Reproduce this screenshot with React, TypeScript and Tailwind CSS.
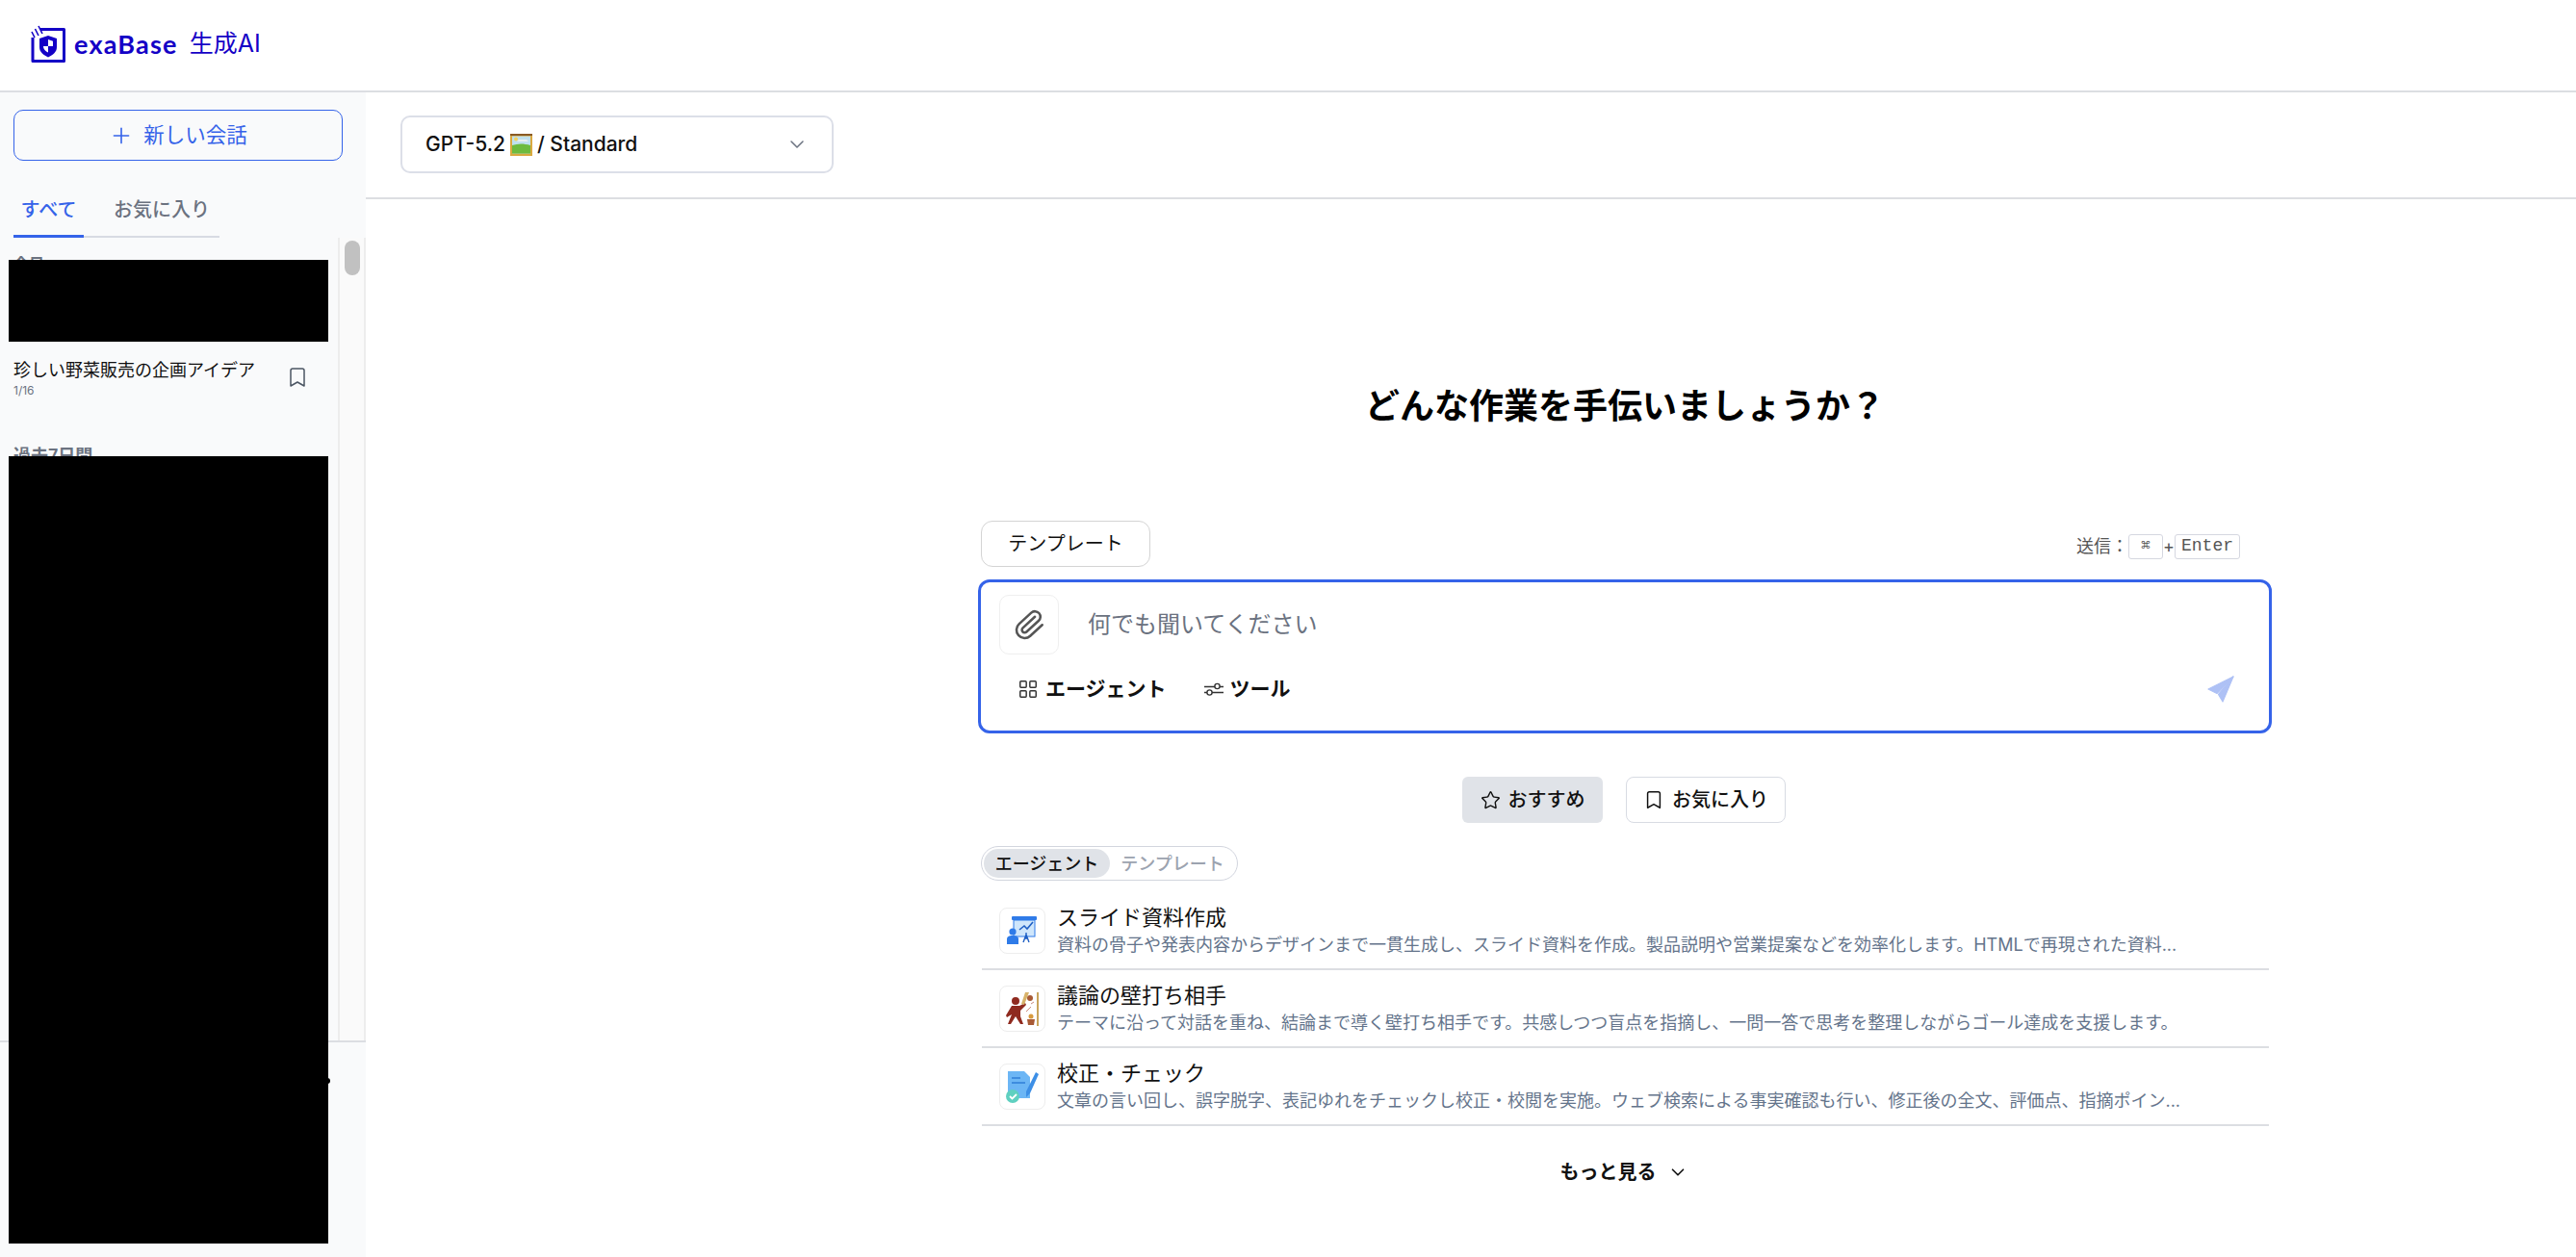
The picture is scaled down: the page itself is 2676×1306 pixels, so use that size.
import React from "react";
import { Bookmark, ChevronDown, LayoutGrid, Paperclip, Plus, Star } from "lucide-react";

const AGENTS = [
  {
    title: "スライド資料作成",
    body: "資料の骨子や発表内容からデザインまで一貫生成し、スライド資料を作成。製品説明や営業提案などを効率化します。HTMLで再現された資料...",
    icon: "slide",
  },
  {
    title: "議論の壁打ち相手",
    body: "テーマに沿って対話を重ね、結論まで導く壁打ち相手です。共感しつつ盲点を指摘し、一問一答で思考を整理しながらゴール達成を支援します。",
    icon: "wall",
  },
  {
    title: "校正・チェック",
    body: "文章の言い回し、誤字脱字、表記ゆれをチェックし校正・校閲を実施。ウェブ検索による事実確認も行い、修正後の全文、評価点、指摘ポイン...",
    icon: "check",
  },
];

const Logo = () => (
  <svg width="38" height="40" viewBox="0 0 38 40" fill="none">
    <path d="M11 4.500H35.500V37.500H3V13" stroke="#1400c6" strokeWidth="3" strokeLinejoin="round" />
    <path d="M2 7l3 6M5.500 4l3.500 7M9 1l4 8" stroke="#1400c6" strokeWidth="1.600" />
    <path d="M19 11l9 3v9c0 5-4 8-9 10.500c-5-2.500-9-5.500-9-10.500v-9z" fill="#1400c6" />
    <path d="M19 15l5 1.800v5.200h-5zM19 22v6.500c-2.500-1.300-5-3-5-6.500z" fill="#fff" />
  </svg>
);

const PictureEmoji = () => (
  <svg width="23" height="23" viewBox="0 0 23 23" className="mx-[5px] inline-block">
    <rect width="23" height="23" fill="#d9a93f" />
    <rect x="0" y="0" width="23" height="2" fill="#8a5a24" />
    <rect x="2" y="2.500" width="19" height="18" fill="#bfe0ee" />
    <circle cx="6" cy="5.500" r="2" fill="#f4d35e" />
    <path d="M9 6h8l2 2H7z" fill="#e9eef0" />
    <path d="M2 12c6-2 12-2 19 0v8.500H2z" fill="#6dbb3e" />
  </svg>
);

const ToolIcon = () => (
  <svg width="22" height="16" viewBox="0 0 22 16" fill="none" stroke="#333" strokeWidth="1.400">
    <path d="M1 5.500h11M17 5.500h4M1 11.500h3M9 11.500h12" />
    <circle cx="14.500" cy="5" r="2.600" />
    <circle cx="6.500" cy="11.500" r="2.600" />
  </svg>
);

const SendIcon = () => (
  <svg width="28" height="28" viewBox="0 0 28 28" fill="#aec1f5" stroke="#aec1f5" strokeWidth="1.200" strokeLinejoin="round">
    <path d="M27 1 1 14l9 4.500z" />
    <path d="M27 1 11.500 19.500 16 27z" />
  </svg>
);

const SlideIcon = () => (
  <svg width="32" height="32" viewBox="0 0 32 32">
    <rect x="5" y="1" width="26" height="4" rx="1" fill="#2f7be8" />
    <rect x="7" y="5" width="22" height="17" fill="#cfe6fb" stroke="#2f7be8" strokeWidth="1" />
    <path d="M13 15l5-4 3 3 6-7" fill="none" stroke="#1f5fc4" strokeWidth="1.600" />
    <path d="M20 20l-3 8M20 20l3 8M20 18v7" stroke="#1f5fc4" strokeWidth="1.400" />
    <circle cx="6" cy="17" r="3.600" fill="#2f7be8" />
    <path d="M0 30v-5c0-3 2-4 6-4s6 1 6 4v5z" fill="#2f7be8" />
  </svg>
);

const WallIcon = () => (
  <svg width="36" height="38" viewBox="0 0 36 38">
    <rect x="33" y="2" width="2" height="35" fill="#c9a45c" />
    <circle cx="11" cy="11" r="4" fill="#8f2a1f" />
    <path d="M7 16h8l6-3 1 2-6 6v6l3 8h-3l-5-8-5 8h-3l4-10-5 3-1-2z" fill="#8f2a1f" />
    <path d="M17 14l4-12h4l-5 13z" fill="#d8b36a" />
    <circle cx="26" cy="8" r="3" fill="#a85a35" />
    <path d="M22 22l5-5M27 14l3-2" stroke="#c98b7c" strokeWidth="1" />
    <path d="M23 30h8l-1 6h-6z" fill="#a85a35" />
    <circle cx="27" cy="27" r="2.500" fill="#d89a3e" />
  </svg>
);

const CheckIcon = () => (
  <svg width="36" height="36" viewBox="0 0 36 36">
    <path d="M3 2h17l6 6v22H3z" fill="#6cb6f5" />
    <path d="M7 9h9M7 14h14" stroke="#2f7fd8" strokeWidth="1.400" />
    <path d="M32 3l3 2-9 20-4 4 0-6z" fill="#3d8fe6" />
    <circle cx="8" cy="28" r="7" fill="#5fd0c0" />
    <path d="M5 28l2.500 2.500L12 26" fill="none" stroke="#fff" strokeWidth="1.800" />
  </svg>
);

const AgentIcon = ({ name }: { name: string }) => {
  if (name === "slide") return <SlideIcon />;
  if (name === "wall") return <WallIcon />;
  return <CheckIcon />;
};

const Redaction = ({ className }: { className: string }) => (
  <div className={`absolute left-[9px] w-[332px] bg-black ${className}`} />
);

export default function App() {
  return (
    <div className="relative flex h-[1306px] w-[2676px] flex-col overflow-hidden bg-white text-black font-['Inter','Noto_Sans_CJK_JP',sans-serif]">
      <header className="flex h-[96px] shrink-0 items-center border-b-2 border-[#dcdee2] pl-[31px] pb-[2px]">
        <Logo />
        <span className="ml-[8px] font-['Lato','Noto_Sans_CJK_JP',sans-serif] text-[27px] font-bold tracking-[1.200px] text-[#1400c6]">exaBase</span>
        <span className="ml-[12px] text-[25px] text-[#1400c6]">生成AI</span>
      </header>

      <div className="flex min-h-0 flex-1">
        <aside className="flex w-[380px] shrink-0 flex-col bg-[#f9fafb]">
          <div className="px-[14px] pt-[18px]">
            <button className="flex h-[53px] w-[342px] items-center justify-center gap-[10px] rounded-[10px] border border-[#3563e9] text-[21.500px] text-[#3563e9]">
              <Plus size={26} strokeWidth={1.500} />
              新しい会話
            </button>
            <div className="mt-[22px] flex h-[58px] w-[214px] border-b-2 border-[#d8dbe3]">
              <div className="-mb-[2px] flex h-[58px] w-[73px] items-center justify-center border-b-[3px] border-[#3563e9] pt-[2px] text-[20px] font-medium text-[#3563e9]">すべて</div>
              <div className="ml-[31px] flex items-center pt-[2px] text-[20px] font-medium text-[#6b7280]">お気に入り</div>
            </div>
          </div>

          <div className="flex h-[834px] min-h-0">
            <div className="w-[351px] shrink-0 overflow-hidden pl-[14px] pt-[17px]">
              <div className="text-[16px] font-semibold leading-[20px] text-[#6b7280]">今日</div>
              <div className="mt-[88px] flex h-[60px] items-start">
                <div className="w-[287px]">
                  <div className="text-[18px] leading-[26px] text-[#111]">珍しい野菜販売の企画アイデア</div>
                  <div className="mt-[1px] text-[12px] leading-[14px] text-[#6b7280]">1/16</div>
                </div>
                <Bookmark size={24} strokeWidth={1.5} className="mt-[8px] -ml-[4px] text-[#4b5563]" />
              </div>
              <div className="mt-[30px] text-[18px] font-semibold leading-[24px] text-[#6b7280]">過去7日間</div>
            </div>
            <div className="w-[29px] shrink-0 border-x-2 border-[#ededed] bg-[#fafafa] pl-[5px] pt-[3px]">
              <div className="h-[36px] w-[16px] rounded-full bg-[#c1c1c1]" />
            </div>
          </div>

          <div className="flex-1 border-t-2 border-[#dcdee2]" />
        </aside>

        <main className="flex min-w-0 flex-1 flex-col">
          <div className="flex h-[111px] shrink-0 items-center border-b-2 border-[#dcdee2] pl-[36px] pb-[1px]">
            <button className="flex h-[60px] w-[450px] items-center justify-between rounded-[10px] border-2 border-[#dcdfe8] pl-[24px] pr-[24px] text-[21px] font-medium text-[#111]">
              <span className="flex items-center">GPT-5.2<PictureEmoji />/ Standard</span>
              <ChevronDown size={24} strokeWidth={1.5} className="text-[#6b7280]" />
            </button>
          </div>

          <div className="ml-[636px] flex w-[1344px] flex-col">
            <h1 className="mt-[191px] text-center text-[36px] font-bold leading-[48px]">どんな作業を手伝いましょうか？</h1>

            <div className="mt-[95px] flex h-[48px] items-center justify-between pl-[3px] pr-[33px]">
              <button className="flex h-[48px] w-[176px] items-center justify-center rounded-[12px] border border-[#d4d4d4] text-[20px] text-[#111]">テンプレート</button>
              <div className="mt-[5px] flex items-center text-[18px] text-[#555]">
                <span>送信：</span>
                <kbd className="flex h-[26px] w-[36px] items-center justify-center rounded-[3px] border border-[#d5d7e0] font-['Liberation_Mono',monospace] text-[16px]">⌘</kbd>
                <span>+</span>
                <kbd className="flex h-[26px] w-[68px] items-center justify-center rounded-[3px] border border-[#d5d7e0] font-['Liberation_Mono',monospace] text-[18px]">Enter</kbd>
              </div>
            </div>

            <div className="mt-[13px] h-[160px] rounded-[12px] border-[3px] border-[#3563e9] pl-[19px] pr-[36px] pt-[13px]">
              <div className="flex items-center">
                <div className="flex h-[62px] w-[62px] items-center justify-center rounded-[10px] border border-[#efefef]">
                  <Paperclip size={34} strokeWidth={1.8} className="rotate-[3deg] text-[#555]" />
                </div>
                <span className="ml-[30px] text-[24px] leading-[34px] text-[#6b7280]">何でも聞いてください</span>
              </div>
              <div className="mt-[20px] flex items-center justify-between">
                <div className="flex items-center pl-[19px]">
                  <LayoutGrid size={22} strokeWidth={1.6} className="text-[#333]" />
                  <span className="ml-[7px] text-[21px] font-semibold text-[#111]">エージェント</span>
                  <span className="ml-[38px]"><ToolIcon /></span>
                  <span className="ml-[6px] text-[21px] font-semibold text-[#111]">ツール</span>
                </div>
                <SendIcon />
              </div>
            </div>

            <div className="mt-[45px] flex justify-center gap-[24px] pr-[2px]">
              <button className="flex h-[48px] w-[146px] items-center justify-center gap-[8px] rounded-[6px] bg-[#e0e3e8] text-[20px] font-medium text-[#111]">
                <Star size={21} strokeWidth={1.6} />
                おすすめ
              </button>
              <button className="flex h-[48px] w-[166px] items-center justify-center gap-[8px] rounded-[8px] border border-[#d8dbe3] text-[20px] font-medium text-[#111]">
                <Bookmark size={22} strokeWidth={1.6} />
                お気に入り
              </button>
            </div>

            <div className="ml-[3px] mt-[24px] flex h-[36px] w-[267px] items-center rounded-full border border-[#d2d5de] px-[2px] text-[18px] font-medium">
              <div className="flex h-[30px] w-[131px] items-center justify-center rounded-full bg-[#e0e3e8] text-[#111]">エージェント</div>
              <div className="flex h-[30px] flex-1 items-center justify-center text-[#9ca3af]">テンプレート</div>
            </div>

            <div className="ml-[4px] mt-[12px] w-[1337px]">
              {AGENTS.map((a) => (
                <div key={a.title} className="flex h-[81px] items-center border-b-2 border-[#dcdee2] pl-[18px]">
                  <div className="flex h-[48px] w-[48px] shrink-0 items-center justify-center rounded-[8px] border border-[#ededed]">
                    <AgentIcon name={a.icon} />
                  </div>
                  <div className="ml-[12px] min-w-0">
                    <div className="text-[22px] leading-[30px] text-[#111]">{a.title}</div>
                    <div className="mt-[1px] whitespace-nowrap text-[18px] leading-[26px] text-[#64748b]">{a.body}</div>
                  </div>
                </div>
              ))}
            </div>

            <button className="mt-[33px] flex h-[30px] items-center justify-center gap-[11px] pr-[2px] text-[20px] font-semibold text-[#111]">
              もっと見る
              <ChevronDown size={22} strokeWidth={1.8} />
            </button>
          </div>
        </main>
      </div>

      {/* blacked-out conversation titles */}
      <Redaction className="top-[270px] h-[85px]" />
      <Redaction className="top-[474px] h-[818px]" />
      <div className="absolute left-[340px] top-[1120px] h-[6px] w-[3px] rounded-r-full bg-black" />
    </div>
  );
}
